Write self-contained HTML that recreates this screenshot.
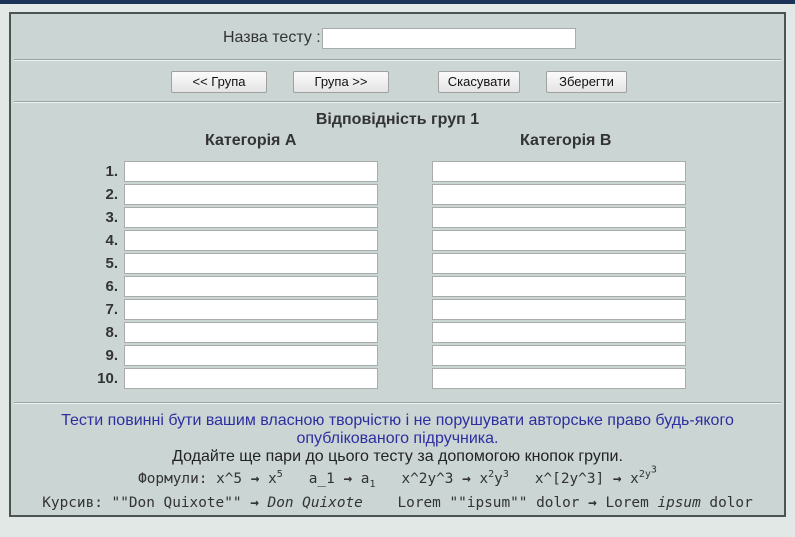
<!DOCTYPE html>
<html><head><meta charset="utf-8"><style>
body{margin:0;background:#e2e8e6;font-family:"Liberation Sans",sans-serif;width:795px;height:537px;overflow:hidden;position:relative}
.top{position:absolute;left:0;top:0;width:795px;height:4px;background:#1c3358}
.box{position:absolute;left:9px;top:12px;width:773px;height:501px;border:2px solid #4a5452;background:#cad5d4}
.a{position:absolute}
.hr{position:absolute;left:3px;width:767px;height:0;border-top:1px solid #9aa3a2;border-bottom:1px solid #eef2f1}
input{position:absolute;box-sizing:border-box;border:1px solid #a8acab;background:#fff;height:21px;width:254px;margin:0;padding:0}
.btn{position:absolute;box-sizing:border-box;height:22px;border:1px solid #a0a0a0;border-radius:2px;background:linear-gradient(#fbfbfb,#e4e4e4);font-size:13px;color:#111;text-align:center;line-height:20px}
.n{position:absolute;width:40px;text-align:right;font-weight:bold;font-size:15px;color:#333}
.c{position:absolute;left:0;width:773px;text-align:center;white-space:nowrap}
.m{font-family:"DejaVu Sans Mono","Liberation Mono",monospace;font-size:14.4px;color:#333;line-height:18px}
.m sup,.m sub{font-size:10px;line-height:0}
.ar{font-weight:bold}
</style></head><body>
<div class="top"></div>
<div class="box">
<div class="a" style="left:212px;top:15px;font-size:16px;color:#333">Назва тесту :</div>
<input style="left:311px;top:14px;height:21px">
<div class="hr" style="top:45px"></div>
<div class="btn" style="left:160px;top:57px;width:96px">&lt;&lt; Група</div>
<div class="btn" style="left:282px;top:57px;width:96px">Група &gt;&gt;</div>
<div class="btn" style="left:427px;top:57px;width:82px">Скасувати</div>
<div class="btn" style="left:535px;top:57px;width:81px">Зберегти</div>
<div class="hr" style="top:87px"></div>
<div class="c" style="top:97px;font-size:16px;font-weight:bold;color:#333">Відповідність груп 1</div>
<div class="a" style="left:194px;top:118px;font-size:16px;font-weight:bold;color:#333">Категорія А</div>
<div class="a" style="left:509px;top:118px;font-size:16px;font-weight:bold;color:#333">Категорія В</div>
<div id="rows"></div>
<div class="hr" style="top:388px"></div>
<div class="c" style="top:398px;font-size:16px;color:#2e2ea0;line-height:18px">Тести повинні бути вашим власною творчістю і не порушувати авторське право будь-якого<br>опублікованого підручника.</div>
<div class="c" style="top:434px;font-size:16px;color:#222">Додайте ще пари до цього тесту за допомогою кнопок групи.</div>
<div class="c m" style="top:456px">Формули: x^5 <span class="ar">→</span> x<sup>5</sup> &nbsp; a_1 <span class="ar">→</span> a<sub>1</sub> &nbsp; x^2y^3 <span class="ar">→</span> x<sup>2</sup>y<sup>3</sup> &nbsp; x^[2y^3] <span class="ar">→</span> x<sup>2y<sup>3</sup></sup></div>
<div class="c m" style="top:480px">Курсив: ""Don Quixote"" <span class="ar">→</span> <i>Don Quixote</i> &nbsp;&nbsp; Lorem ""ipsum"" dolor <span class="ar">→</span> Lorem <i>ipsum</i> dolor</div>
</div>
<script>
var h='';for(var i=0;i<10;i++){var t=147+i*23;h+='<div class="n" style="left:67px;top:'+(t+2)+'px">'+(i+1)+'.</div><input style="left:113px;top:'+t+'px"><input style="left:421px;top:'+t+'px">';}
document.getElementById('rows').innerHTML=h;
</script>
</body></html>
